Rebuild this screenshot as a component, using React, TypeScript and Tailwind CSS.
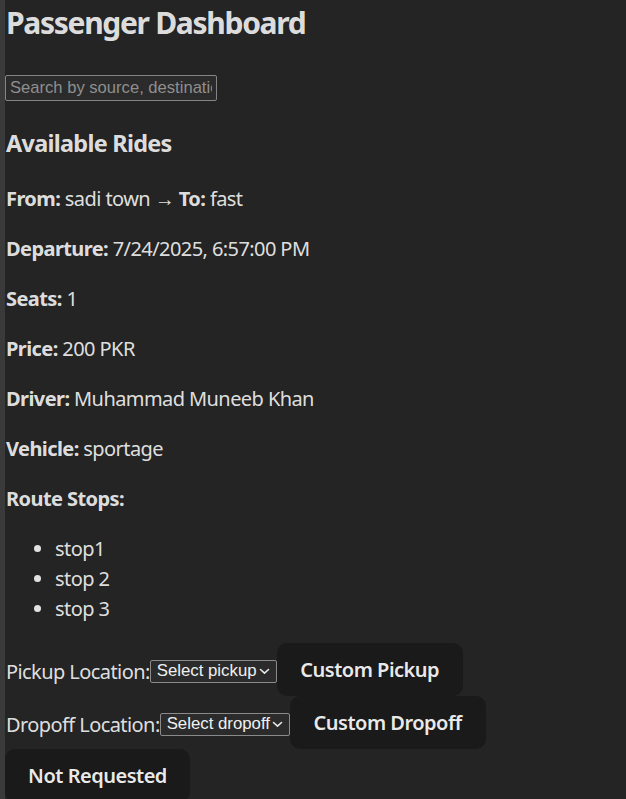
import React from "react";

const Chevron = () => (
  <svg width="11" height="7" viewBox="0 0 11 7" className="shrink-0">
    <path d="M1.5 1.5 L5.5 5.2 L9.5 1.5" fill="none" stroke="#e8e8e8" strokeWidth="1.6" strokeLinecap="round" strokeLinejoin="round" />
  </svg>
);

const Select = ({ label, w }: { label: string; w: string }) => (
  <div
    className={`${w} mt-[4px] h-[23px] flex items-center justify-between pl-[6px] pr-[6px] border border-[#8a8a8a] rounded-[2px] bg-[#2b2b2b] text-[16.8px] tracking-normal text-[#f0f0f0] leading-none shrink-0`}
    style={{ fontFamily: '"Liberation Sans", Arial, sans-serif' }}
  >
    <span>{label}</span>
    <Chevron />
  </div>
);

const Btn = ({ children, w }: { children: React.ReactNode; w: string }) => (
  <button
    className={`${w} h-[53px] rounded-[10px] bg-[#1a1a1a] text-[20px] font-semibold tracking-[-0.5px] text-[rgba(255,255,255,0.92)] flex items-center justify-center shrink-0`}
  >
    {children}
  </button>
);

export default function App() {
  return (
    <div
      className="min-h-screen bg-[#242424] border-l-[5px] border-[#3a3a3a] text-[rgba(255,255,255,0.87)] text-[20px] leading-[30px] tracking-[-0.58px]"
      style={{ fontFamily: '"Noto Sans", "Open Sans", sans-serif' }}
    >
      <h1 className="text-[30px] leading-[45px] font-bold m-0 pl-[1px] tracking-[-1.3px]">Passenger Dashboard</h1>
      <input
        placeholder="Search by source, destination"
        className="mt-[30px] block w-[212px] h-[26px] border border-[#858585] rounded-[2px] bg-[#2b2b2b] px-[4px] text-[16.6px] tracking-normal placeholder:text-[#8f8f8f] outline-none"
        style={{ fontFamily: '"Liberation Sans", Arial, sans-serif' }}
      />
      <h3 className="mt-[25px] text-[23.4px] leading-[35px] font-bold pl-[1px] tracking-[-0.7px]">Available Rides</h3>
      <div className="pl-[1px]">
        <p className="mt-[23px]"><strong>From:</strong> sadi town → <strong>To:</strong> fast</p>
        <p className="mt-[20px]"><strong>Departure:</strong> 7/24/2025, 6:57:00 PM</p>
        <p className="mt-[20px]"><strong>Seats:</strong> 1</p>
        <p className="mt-[20px]"><strong>Price:</strong> 200 PKR</p>
        <p className="mt-[20px]"><strong>Driver:</strong> Muhammad Muneeb Khan</p>
        <p className="mt-[20px]"><strong>Vehicle:</strong> sportage</p>
        <p className="mt-[20px]"><strong>Route Stops:</strong></p>
      </div>
      <ul className="mt-[20px] list-disc pl-[50px]">
        <li>stop1</li>
        <li>stop 2</li>
        <li>stop 3</li>
      </ul>
      <div className="mt-[19px]">
        <div className="flex items-center h-[53px]">
          <span className="pl-[1px] mt-[4px]">Pickup Location:</span>
          <Select label="Select pickup" w="w-[127px]" />
          <Btn w="w-[186px]">Custom Pickup</Btn>
        </div>
        <div className="flex items-center h-[53px]">
          <span className="pl-[1px] mt-[4px]">Dropoff Location:</span>
          <Select label="Select dropoff" w="w-[130px]" />
          <Btn w="w-[196px]">Custom Dropoff</Btn>
        </div>
        <div className="flex items-center h-[53px]">
          <Btn w="w-[185px]">Not Requested</Btn>
        </div>
      </div>
    </div>
  );
}
